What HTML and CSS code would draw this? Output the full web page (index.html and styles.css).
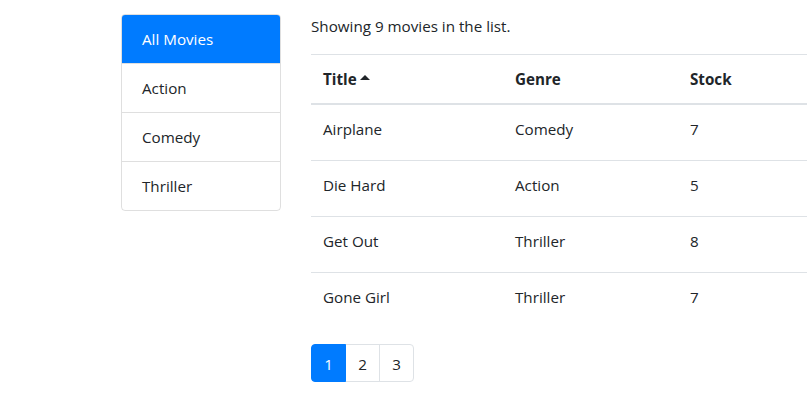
FILE: index.html
```html
<!DOCTYPE html>
<html lang="en">
<head>
<meta charset="utf-8">
<title>Movies</title>
<link rel="stylesheet" href="styles.css">
</head>
<body>
<main class="page">
  <aside class="sidebar">
    <ul class="list-group">
      <li class="list-item active">All Movies</li>
      <li class="list-item">Action</li>
      <li class="list-item">Comedy</li>
      <li class="list-item">Thriller</li>
    </ul>
  </aside>
  <section class="content">
    <p class="summary">Showing 9 movies in the list.</p>
    <table class="movies">
      <thead>
        <tr>
          <th class="col-title">Title <span class="caret"></span></th>
          <th class="col-genre">Genre</th>
          <th class="col-stock">Stock</th>
        </tr>
      </thead>
      <tbody>
        <tr><td>Airplane</td><td>Comedy</td><td>7</td></tr>
        <tr><td>Die Hard</td><td>Action</td><td>5</td></tr>
        <tr><td>Get Out</td><td>Thriller</td><td>8</td></tr>
        <tr><td>Gone Girl</td><td>Thriller</td><td>7</td></tr>
      </tbody>
    </table>
    <nav class="pagination">
      <a class="page-link active">1</a>
      <a class="page-link">2</a>
      <a class="page-link">3</a>
    </nav>
  </section>
</main>
</body>
</html>
```
FILE: styles.css
```css
html, body {
  margin: 0;
  overflow: hidden;
}
body {
  font-family: "Open Sans", "Noto Sans", sans-serif;
  font-size: 15.2px;
  line-height: 24px;
  color: #212529;
  background: #fff;
}
.page {
  display: flex;
  gap: 30px;
  padding: 14px 0 0 121px;
}
.sidebar {
  width: 160px;
  flex: none;
}
.list-group {
  list-style: none;
  margin: 0;
  padding: 0;
  border: 1px solid rgba(0,0,0,.125);
  border-radius: 4px;
  overflow: hidden;
}
.list-item {
  padding: 12px 20px;
  height: 24px;
  border-top: 1px solid rgba(0,0,0,.125);
}
.list-item:first-child {
  border-top: none;
}
.list-item.active {
  background: #007bff;
  color: #fff;
  margin: -1px -1px 0 -1px;
  padding: 13px 21px 12px;
}
.content {
  width: 496px;
  flex: none;
}
.summary {
  margin: 0 0 16px;
}
.movies {
  width: 100%;
  border-collapse: collapse;
  margin-bottom: 16px;
}
.movies th, .movies td {
  padding: 12px;
  text-align: left;
  vertical-align: top;
  border-top: 1px solid #dee2e6;
}
.movies th {
  font-weight: 700;
  border-bottom: 2px solid #dee2e6;
}
.movies td {
  height: 31px;
}
.col-title { width: 168px; }
.col-genre { width: 151px; }
.caret {
  display: inline-block;
  width: 0;
  height: 0;
  border-left: 5px solid transparent;
  border-right: 5px solid transparent;
  border-bottom: 5px solid #212529;
  vertical-align: 5px;
  margin-left: -1px;
}
.pagination {
  display: flex;
}
.page-link {
  display: block;
  box-sizing: border-box;
  width: 35px;
  height: 38px;
  padding: 7px 0;
  text-align: center;
  line-height: 24px;
  border: 1px solid #dee2e6;
  margin-left: -1px;
  color: #212529;
}
.page-link:first-child {
  margin-left: 0;
  border-radius: 4px 0 0 4px;
}
.page-link:last-child {
  border-radius: 0 4px 4px 0;
}
.page-link.active {
  background: #007bff;
  border-color: #007bff;
  color: #fff;
  position: relative;
}
```
